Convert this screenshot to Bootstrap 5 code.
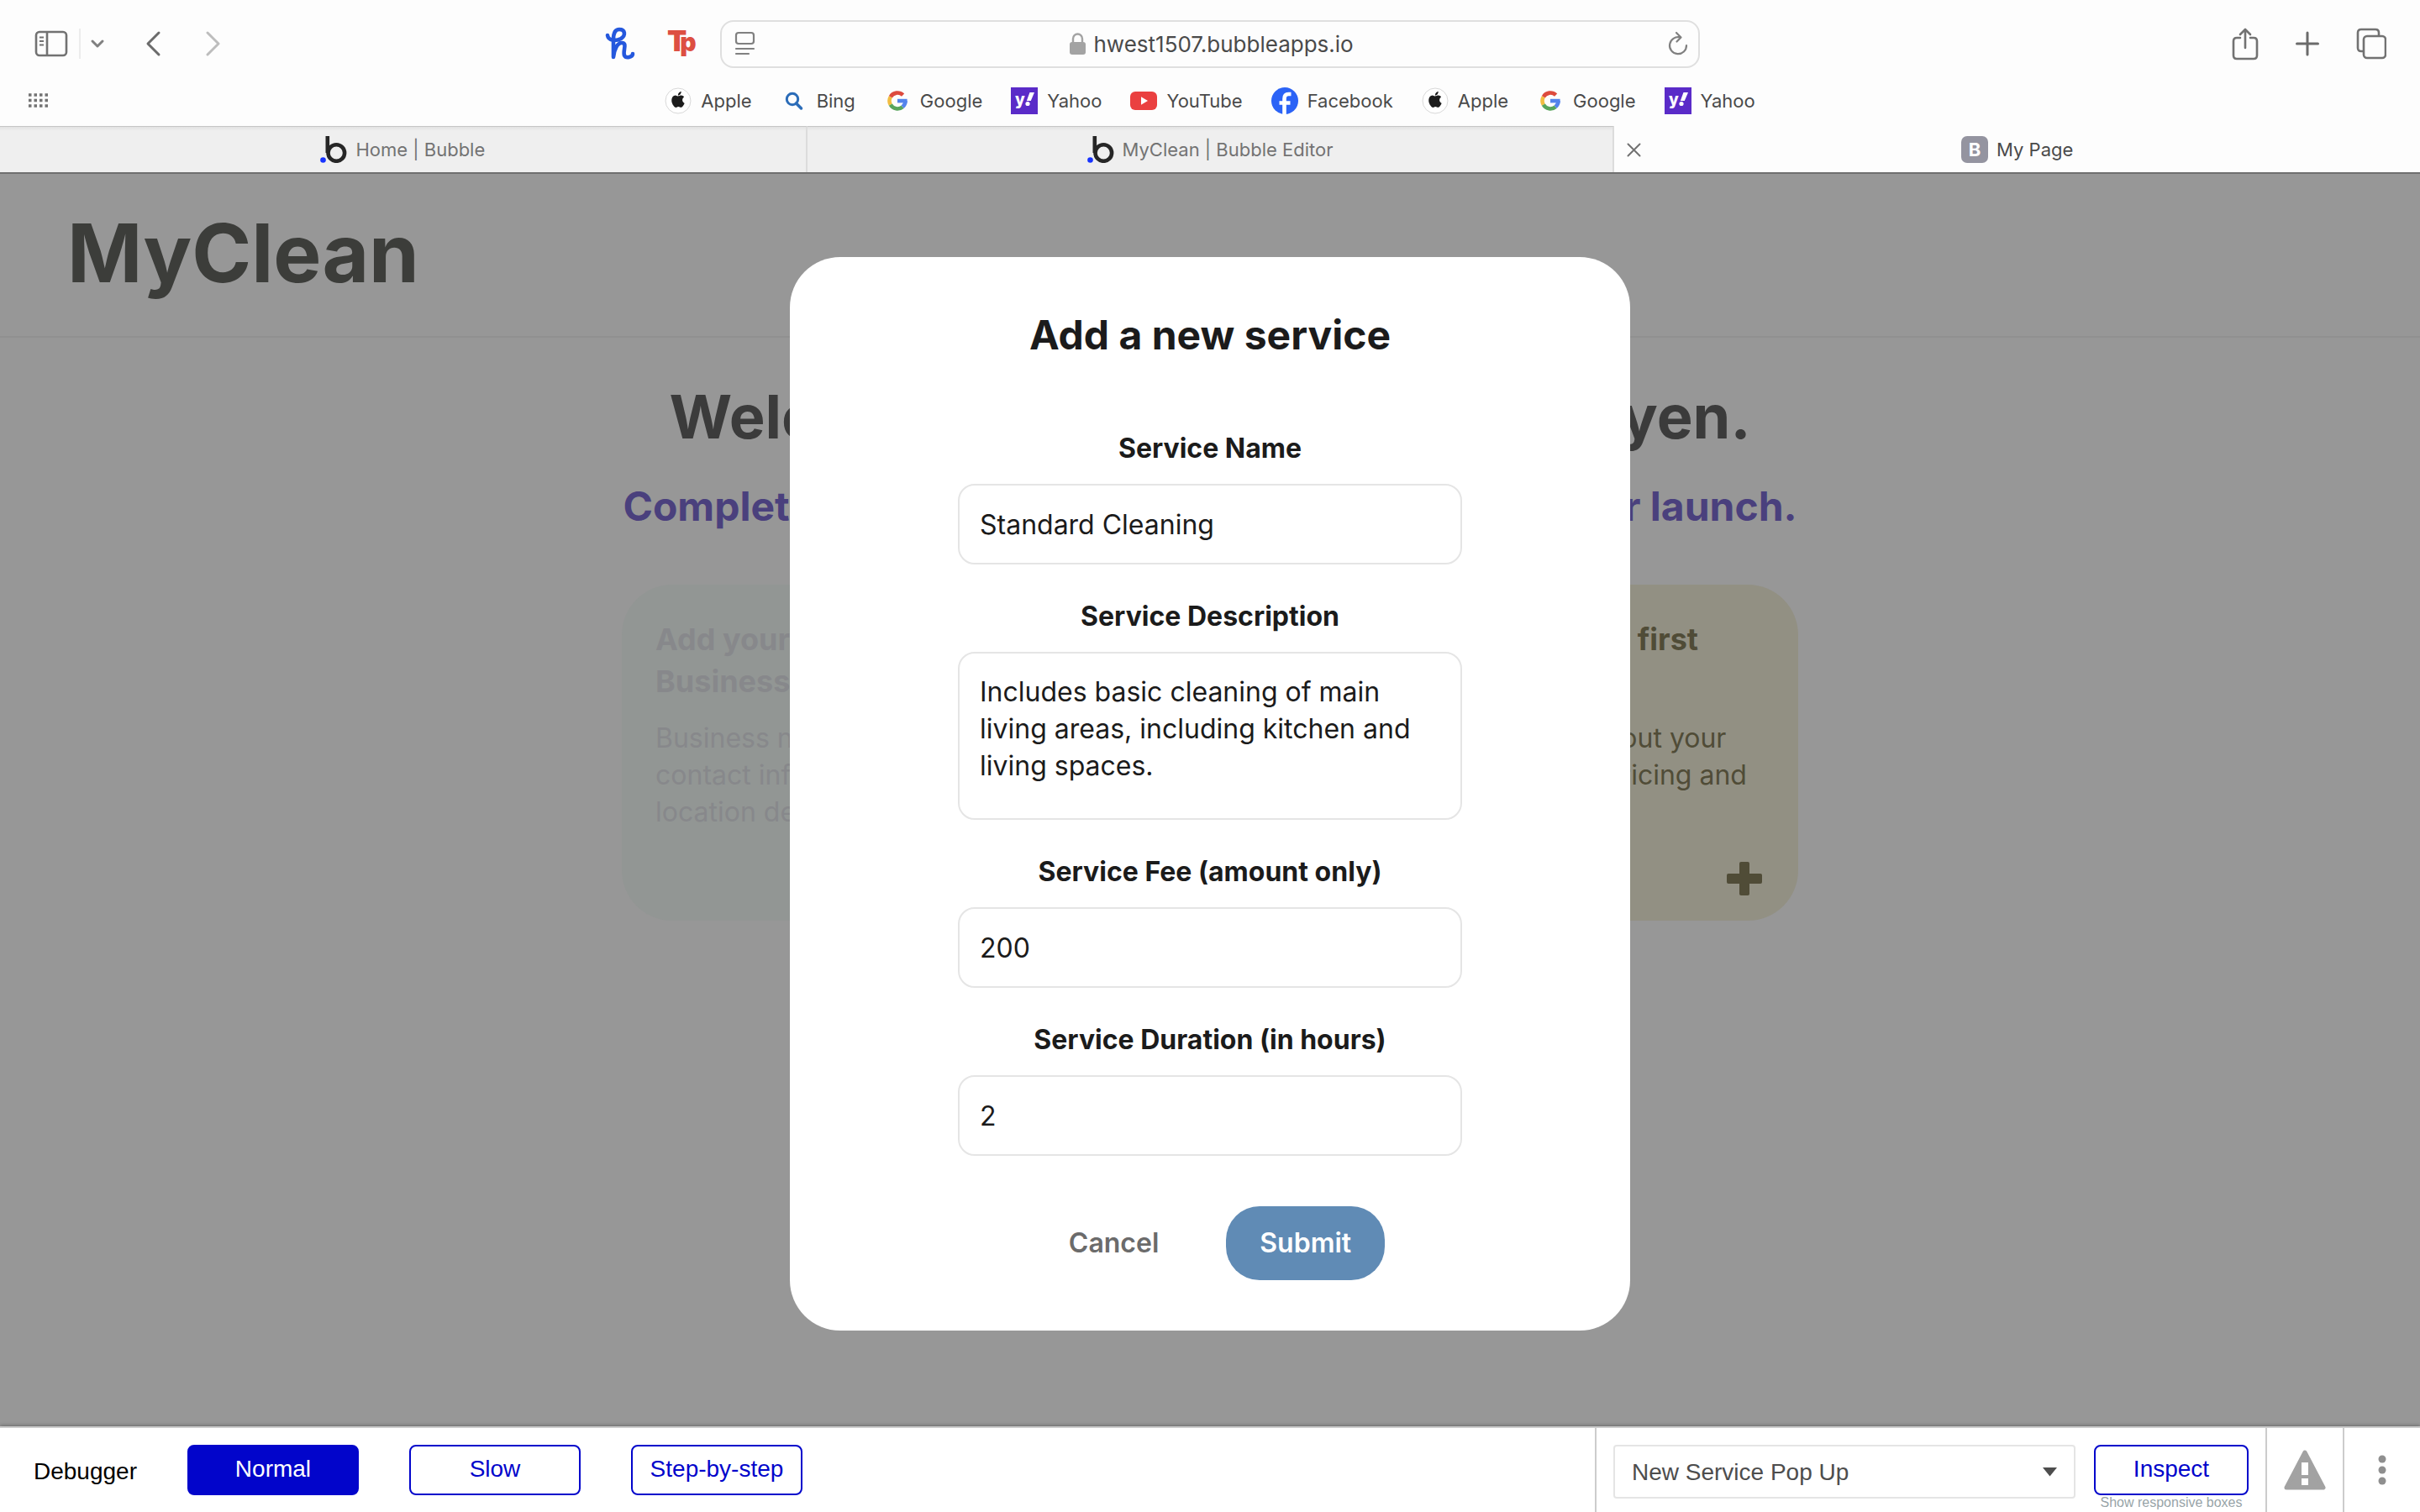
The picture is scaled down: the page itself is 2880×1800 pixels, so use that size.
<!DOCTYPE html>
<html lang="en">
<head>
<meta charset="utf-8">
<meta name="viewport" content="width=device-width, initial-scale=1">
<title>My Page</title>
<link href="https://cdn.jsdelivr.net/npm/bootstrap@5.3.0/dist/css/bootstrap.min.css" rel="stylesheet">
<style>
  body { font-family: Inter, "Liberation Sans", sans-serif; color: #1b1b1b; background: #fff; line-height: normal; }
  svg { display: block; flex: none; }
  button { line-height: normal; }
  .plain-btn { background: none; border: 0; padding: 0; display: block; }

  /* browser window */
  .browser { background: #fdfdfd; color: #4a4a4a; font-size: 22px; }
  .toolbar { height: 104px; padding: 0 40px; gap: 27px; }
  .toolbar-side { flex: 1 1 0; }
  .tool-group { gap: 44px; }
  .extension-group { gap: 38px; }
  .address { width: 1166px; height: 57px; border: 2px solid #dfdfdf; border-radius: 16px; padding: 0 12px 0 15px; }
  .address input { width: 312px; border: 0; padding: 0; background: none; color: #4a4a4a; font-size: 26px; outline: 0; }
  .split-line { width: 2px; height: 36px; background: #ececec; margin: 0 8px 0 12px; }
  .bookmarks { gap: 34px; }
  .bookmarks a { color: #4a4a4a; gap: 11px; }
  .bookmark-bar { height: 46px; padding: 0 34px 14px; }
  .tab-strip { height: 57px; border-bottom: 2px solid #6f6f6f; }
  .page-tab { flex: 1 1 0; gap: 10px; color: #737373; text-decoration: none; }
  .page-tab.idle { background: linear-gradient(#e2e2e2, #efefef 5px); border-top: 1px solid #c6c6c6; border-right: 2px solid #dcdcdc; }
  .page-tab.current { color: #4a4a4a; }
  .close-tab { left: 15px; top: 20px; }
  .letter-icon { width: 32px; height: 32px; border-radius: 7px; background: #9494a0; color: #fff; font-size: 22px; font-weight: 700; }

  /* dimmed page behind the dialog */
  .dimmed { background: #979797; }
  .brand-bar { height: 195px; padding: 0 80px; border-bottom: 2px solid #909090; }
  .brand-name { font-size: 96px; font-weight: 700; line-height: 116px; padding-top: 36px; color: #3c3d3a; }
  .hello { font-size: 72px; font-weight: 700; line-height: 88px; margin: 50px 0 0; color: #3b3b3b; }
  .lead-in { font-size: 48px; font-weight: 700; line-height: 60px; margin: 33px 0 0; color: #4a407d; }
  .task-row { width: 1400px; gap: 100px; margin-top: 63px; }
  .task { flex: 1 1 0; height: 400px; border-radius: 60px; padding: 40px; background: #929694; color: #87888b; }
  .task.open { background: #929083; color: #504c37; }
  .task h3 { font-size: 36px; font-weight: 700; line-height: 50px; margin: 0 0 21px; }
  .task p { font-size: 32px; line-height: 44px; margin: 0; }
  .task-add { right: 42px; bottom: 28px; color: #504c37; }

  /* dialog */
  .dialog-layer { inset: 99px 0 auto 0; }
  .dialog { width: 1000px; border-radius: 60px; padding: 60px 200px; background: #fff; }
  .dialog h2 { font-size: 48px; font-weight: 700; line-height: 66px; margin: 0 0 80px; }
  .field { margin-bottom: 40px; }
  .field label { font-size: 32px; font-weight: 700; line-height: 44px; margin-bottom: 20px; }
  .field .form-control { height: 96px; border: 2px solid #e5e5e5; border-radius: 20px; padding: 0 24px; font-size: 32px; line-height: 44px; color: #1b1b1b; resize: none; }
  .field textarea.form-control { height: 200px; padding: 24px; overflow: hidden; }
  .dialog-actions { gap: 40px; margin-top: 60px; }
  .dialog-actions .btn { height: 88px; border: 0; border-radius: 40px; padding: 0 40px; font-size: 32px; font-weight: 600; }
  .btn-cancel { color: #6b6b6b; }
  .btn-submit, .btn-submit:hover { color: #fff; background: #608bb5; }

  /* debugger */
  .debugger { height: 102px; border-top: 2px solid #ccc; background: #fff; font-family: "Liberation Sans", Arial, sans-serif; font-size: 28px; color: #000; box-shadow: 0 -1px 4px rgba(0,0,0,.3); z-index: 2; }
  .debug-left { gap: 60px; padding: 20px 0 0 40px; }
  .debugger .btn { width: 204px; height: 60px; padding: 0 0 2px; border: 2px solid #0205cb; border-radius: 8px; color: #0205cb; font-size: 28px; background: #fff; }
  .debugger .btn.on { background: #0205cb; color: #fff; }
  .debug-right { border-left: 2px solid #ccc; padding: 20px 20px 0; gap: 22px; }
  .debugger select { appearance: none; width: 550px; height: 64px; border: 2px solid #e5e5e5; border-radius: 4px; padding: 0 20px; background: #fff; font-size: 28px; color: #4d4d4d; }
  .caret { right: 22px; top: 27px; pointer-events: none; }
  .debugger .inspect { width: 184px; }
  .hint { font-size: 16px; line-height: 18px; color: #98a4a8; text-decoration: none; }
  .debug-cell { width: 92px; border-left: 2px solid #ccc; }
</style>
<script src="https://cdn.jsdelivr.net/npm/bootstrap@5.3.0/dist/js/bootstrap.bundle.min.js"></script>
</head>
<body class="d-flex flex-column min-vh-100">

<svg class="d-none" aria-hidden="true">
  <symbol id="i-apple" viewBox="0 0 32 32">
    <circle cx="16" cy="16" r="15" fill="#fff" stroke="#d8d8d8"/>
    <g transform="translate(6.5 5) scale(1.18)" fill="#1c1c1c"><path d="M11.182.008C11.148-.03 9.923.023 8.857 1.18c-1.066 1.156-.902 2.482-.878 2.516s1.52.087 2.475-1.258.762-2.391.728-2.43m3.314 11.733c-.048-.096-2.325-1.234-2.113-3.422s1.675-2.789 1.698-2.854-.597-.79-1.254-1.157a3.7 3.7 0 0 0-1.563-.434c-.108-.003-.483-.095-1.254.116-.508.139-1.653.589-1.968.607-.316.018-1.256-.522-2.267-.665-.647-.125-1.333.131-1.824.328-.49.196-1.422.754-2.074 2.237-.652 1.482-.311 3.83-.067 4.56s.625 1.924 1.273 2.796c.576.984 1.34 1.667 1.659 1.899s1.219.386 1.843.067c.502-.308 1.408-.485 1.766-.472.357.013 1.061.154 1.782.539.571.197 1.111.115 1.652-.105.541-.221 1.324-1.059 2.238-2.758q.52-1.185.473-1.282"/></g>
  </symbol>
  <symbol id="i-bing" viewBox="0 0 32 32"><g fill="none" stroke="#2b6cb8" stroke-width="3"><circle cx="14" cy="14" r="6.7"/><path d="M18.500 19l6 6" stroke-width="3.500" stroke-linecap="round"/></g></symbol>
  <symbol id="i-google" viewBox="0 0 32 32"><g fill="none" stroke-width="4.600">
    <path d="M22.600 9.200A9.500 9.500 0 0 0 7.800 11.300" stroke="#dd4b3e"/>
    <path d="M7.800 11.300A9.500 9.500 0 0 0 7.800 20.700" stroke="#f2bd42"/>
    <path d="M7.800 20.700A9.500 9.500 0 0 0 22.200 23.200" stroke="#58a55c"/>
    <path d="M22.200 23.200A9.500 9.500 0 0 0 25.500 16" stroke="#5484ec"/></g><path d="M16 13.800h11.600v4.600H16z" fill="#5484ec"/></symbol>
  <symbol id="i-yahoo" viewBox="0 0 32 32"><path fill="#5a2bc8" d="M0 0h32v32H0z"/>
    <text x="5" y="21" font-family="Inter, sans-serif" font-size="19" font-weight="800" fill="#fff">y</text>
    <path d="M22.500 6h5.500l-4.200 10h-5z" fill="#fff"/><circle cx="20" cy="19.500" r="2.600" fill="#fff"/></symbol>
  <symbol id="i-youtube" viewBox="0 0 32 32"><rect y="5" width="32" height="22" rx="6" fill="#ea4040"/><path d="M13 11.300v9.400l8-4.700z" fill="#fff"/></symbol>
  <symbol id="i-facebook" viewBox="0 0 32 32"><circle cx="16" cy="16" r="16" fill="#2b63f6"/><path d="M15.500 32V13.500q0-5.500 5-5.500h3M9.500 18.500h13" fill="none" stroke="#fff" stroke-width="4.600"/></symbol>
  <symbol id="i-bubble" viewBox="0 0 32 32"><circle cx="3.500" cy="28.500" r="3.300" fill="#1733ff"/><g fill="none" stroke="#262626" stroke-width="4.600"><path d="M8.800 0v20"/><circle cx="19.300" cy="20" r="9.800"/></g></symbol>
</svg>

<header class="browser">
  <div class="toolbar d-flex align-items-center">
    <div class="toolbar-side d-flex align-items-center justify-content-between">
      <div class="tool-group d-flex align-items-center">
        <div class="d-flex align-items-center">
          <button class="plain-btn" aria-label="Sidebar"><svg width="42" height="36" viewBox="0 0 42 36" fill="none" stroke="#727272" stroke-width="2.600"><rect x="3" y="4" width="36" height="28" rx="4"/><path d="M16 4v28"/><path d="M7 10.500h5M7 15h5M7 19.500h5" stroke-width="2"/></svg></button>
          <span class="split-line"></span>
          <button class="plain-btn" aria-label="Tab groups"><svg width="24" height="24" viewBox="0 0 24 24" fill="none" stroke="#808080" stroke-width="3" stroke-linecap="round" stroke-linejoin="round"><path d="M6 9l6 6 6-6"/></svg></button>
        </div>
        <button class="plain-btn" aria-label="Back"><svg width="24" height="36" viewBox="0 0 24 36" fill="none" stroke="#6b6b6b" stroke-width="3" stroke-linecap="round" stroke-linejoin="round"><path d="M17 5L4 18l13 13"/></svg></button>
        <button class="plain-btn" aria-label="Forward"><svg width="24" height="36" viewBox="0 0 24 36" fill="none" stroke="#bdbdbd" stroke-width="3" stroke-linecap="round" stroke-linejoin="round"><path d="M7 5l13 13L7 31"/></svg></button>
      </div>
      <div class="extension-group d-flex align-items-center">
        <button class="plain-btn" aria-label="Honey"><svg width="36" height="40" viewBox="0 0 36 40" fill="none" stroke="#2558dd" stroke-width="4.600" stroke-linecap="round" stroke-linejoin="round"><path d="M3 10C4 17 13 17 19 14C25 10 24 3 17 3C11 3 10 9 10 15V36C11 26 15 19 20 19C27 19 21 28 23 34C25 38 33 36 33 32"/></svg></button>
        <button class="plain-btn" aria-label="Teleparty"><svg width="36" height="40" viewBox="0 0 36 40" font-family="Inter, sans-serif" font-weight="900" fill="#dd4f42"><text x="0" y="29" font-size="34">T<tspan dx="-8" font-size="30">p</tspan></text></svg></button>
      </div>
    </div>
    <div class="address d-flex align-items-center justify-content-between">
      <svg width="26" height="30" viewBox="0 0 26 30" fill="none" stroke="#808080" stroke-width="2.200" stroke-linecap="round"><rect x="2" y="2" width="21" height="13" rx="3"/><path d="M2 21h21M2 27h15"/></svg>
      <div class="d-flex align-items-center gap-2">
        <svg width="22" height="28" viewBox="0 0 22 28"><rect x="1" y="12" width="19" height="15" rx="3" fill="#a3a3a3"/><path d="M5 13V8a5.500 5.500 0 0 1 11 0v5" fill="none" stroke="#a3a3a3" stroke-width="2.400"/></svg>
        <input type="text" aria-label="Address" value="hwest1507.bubbleapps.io">
      </div>
      <button class="plain-btn" aria-label="Reload"><svg width="24" height="30" viewBox="0 0 24 30" fill="none" stroke="#808080" stroke-width="2.200" stroke-linecap="round" stroke-linejoin="round"><path d="M14.500 7.500A10 10 0 1 0 22 17M10 2l5.500 5.500-5 5"/></svg></button>
    </div>
    <div class="toolbar-side tool-group d-flex align-items-center justify-content-end">
      <button class="plain-btn" aria-label="Share"><svg width="32" height="40" viewBox="0 0 32 40" fill="none" stroke="#727272" stroke-width="2.600" stroke-linecap="round" stroke-linejoin="round"><path d="M10 13H6q-4 0-4 4v17q0 4 4 4h20q4 0 4-4V17q0-4-4-4h-4M16 25V3M10 9l6-6 6 6"/></svg></button>
      <button class="plain-btn" aria-label="New tab"><svg width="28" height="30" viewBox="0 0 28 30" stroke="#6b6b6b" stroke-width="3" stroke-linecap="round"><path d="M14 2v26M1.500 15h25"/></svg></button>
      <button class="plain-btn" aria-label="Tab overview"><svg width="36" height="38" viewBox="0 0 36 38" fill="none" stroke="#727272" stroke-width="2.600"><path d="M9 28H6q-4 0-4-4V6q0-4 4-4h17q4 0 4 4v3"/><rect x="9" y="10" width="26" height="26" rx="4"/></svg></button>
    </div>
  </div>

  <div class="bookmark-bar d-flex align-items-center">
    <div class="toolbar-side"><svg width="24" height="20" viewBox="0 0 24 20" stroke="#727272" stroke-width="3.500" stroke-dasharray="3.500 3"><path d="M0 3h23M0 9.500h23M0 16h23"/></svg></div>
    <nav class="bookmarks d-flex align-items-center" aria-label="Favourites">
      <a class="d-flex align-items-center text-decoration-none" href="#"><svg width="32" height="32"><use href="#i-apple"/></svg>Apple</a>
      <a class="d-flex align-items-center text-decoration-none" href="#"><svg width="32" height="32"><use href="#i-bing"/></svg>Bing</a>
      <a class="d-flex align-items-center text-decoration-none" href="#"><svg width="32" height="32"><use href="#i-google"/></svg>Google</a>
      <a class="d-flex align-items-center text-decoration-none" href="#"><svg width="32" height="32"><use href="#i-yahoo"/></svg>Yahoo</a>
      <a class="d-flex align-items-center text-decoration-none" href="#"><svg width="32" height="32"><use href="#i-youtube"/></svg>YouTube</a>
      <a class="d-flex align-items-center text-decoration-none" href="#"><svg width="32" height="32"><use href="#i-facebook"/></svg>Facebook</a>
      <a class="d-flex align-items-center text-decoration-none" href="#"><svg width="32" height="32"><use href="#i-apple"/></svg>Apple</a>
      <a class="d-flex align-items-center text-decoration-none" href="#"><svg width="32" height="32"><use href="#i-google"/></svg>Google</a>
      <a class="d-flex align-items-center text-decoration-none" href="#"><svg width="32" height="32"><use href="#i-yahoo"/></svg>Yahoo</a>
    </nav>
    <div class="toolbar-side"></div>
  </div>

  <div class="tab-strip d-flex">
    <a href="#" class="page-tab idle d-flex align-items-center justify-content-center"><svg width="32" height="32"><use href="#i-bubble"/></svg>Home | Bubble</a>
    <a href="#" class="page-tab idle d-flex align-items-center justify-content-center"><svg width="32" height="32"><use href="#i-bubble"/></svg>MyClean | Bubble Editor</a>
    <div class="page-tab current position-relative d-flex align-items-center justify-content-center">
      <button class="plain-btn close-tab position-absolute" aria-label="Close tab"><svg width="17" height="17" viewBox="0 0 17 17" stroke="#727272" stroke-width="2" stroke-linecap="round"><path d="M1.500 1.500l14 14M15.500 1.500l-14 14"/></svg></button>
      <span class="letter-icon d-flex align-items-center justify-content-center">B</span>My Page
    </div>
  </div>
</header>

<main class="dimmed position-relative flex-grow-1">
  <div class="brand-bar"><div class="brand-name">MyClean</div></div>
  <div class="d-flex flex-column align-items-center">
    <h1 class="hello">Welcome to MyClean, Anna Nguyen.</h1>
    <p class="lead-in">Complete these steps to help you get ready for your launch.</p>
    <div class="task-row d-flex">
      <section class="task"><h3>Add your Business details</h3><p>Business name, contact info, and location details.</p></section>
      <section class="task"></section>
      <section class="task open position-relative"><h3>Add your first<br>service</h3><p>Details about your service, pricing and time.</p>
        <button class="plain-btn task-add position-absolute" aria-label="Add service"><svg width="44" height="44" viewBox="0 0 44 44" fill="currentColor"><rect x="16" y="2" width="12" height="40" rx="2"/><rect x="1" y="16" width="42" height="12" rx="2"/></svg></button>
      </section>
    </div>
  </div>

  <div class="dialog-layer position-absolute d-flex justify-content-center">
    <form class="dialog" role="dialog" aria-labelledby="dialog-title">
      <h2 id="dialog-title" class="text-center">Add a new service</h2>
      <div class="field"><label class="d-block text-center" for="f-name">Service Name</label><input class="form-control" id="f-name" type="text" value="Standard Cleaning"></div>
      <div class="field"><label class="d-block text-center" for="f-desc">Service Description</label><textarea class="form-control" id="f-desc">Includes basic cleaning of main living areas, including kitchen and living spaces.</textarea></div>
      <div class="field"><label class="d-block text-center" for="f-fee">Service Fee (amount only)</label><input class="form-control" id="f-fee" type="text" value="200"></div>
      <div class="field"><label class="d-block text-center" for="f-time">Service Duration (in hours)</label><input class="form-control" id="f-time" type="text" value="2"></div>
      <div class="dialog-actions d-flex justify-content-center">
        <button type="button" class="btn btn-cancel">Cancel</button>
        <button type="button" class="btn btn-submit">Submit</button>
      </div>
    </form>
  </div>
</main>

<footer class="debugger d-flex justify-content-between">
  <div class="debug-left d-flex align-items-start">
    <div class="d-flex align-items-center h-100 pb-3"><span>Debugger</span></div>
    <button class="btn on">Normal</button>
    <button class="btn">Slow</button>
    <button class="btn">Step-by-step</button>
  </div>
  <div class="d-flex">
    <div class="debug-right d-flex align-items-start">
      <div class="position-relative">
        <select aria-label="Element"><option>New Service Pop Up</option></select>
        <svg class="caret position-absolute" width="17" height="11" viewBox="0 0 17 11"><path d="M0 0h17L8.500 10.500z" fill="#4d4d4d"/></svg>
      </div>
      <div class="d-flex flex-column align-items-center">
        <button class="btn inspect">Inspect</button>
        <a href="#" class="hint">Show responsive boxes</a>
      </div>
    </div>
    <div class="debug-cell d-flex align-items-center justify-content-center"><svg width="50" height="48" viewBox="0 0 50 48"><path d="M25 3L47 45H3z" fill="#a2a2a2" stroke="#a2a2a2" stroke-width="5" stroke-linejoin="round"/><path d="M21 15h8v15h-8zM21 34h8v8h-8z" fill="#fff"/></svg></div>
    <div class="debug-cell d-flex align-items-center justify-content-center"><button class="plain-btn" aria-label="More"><svg width="10" height="36" viewBox="0 0 10 36" fill="#8f8f8f"><circle cx="5" cy="5" r="4.500"/><circle cx="5" cy="18" r="4.500"/><circle cx="5" cy="31" r="4.500"/></svg></button></div>
  </div>
</footer>
</body>
</html>
